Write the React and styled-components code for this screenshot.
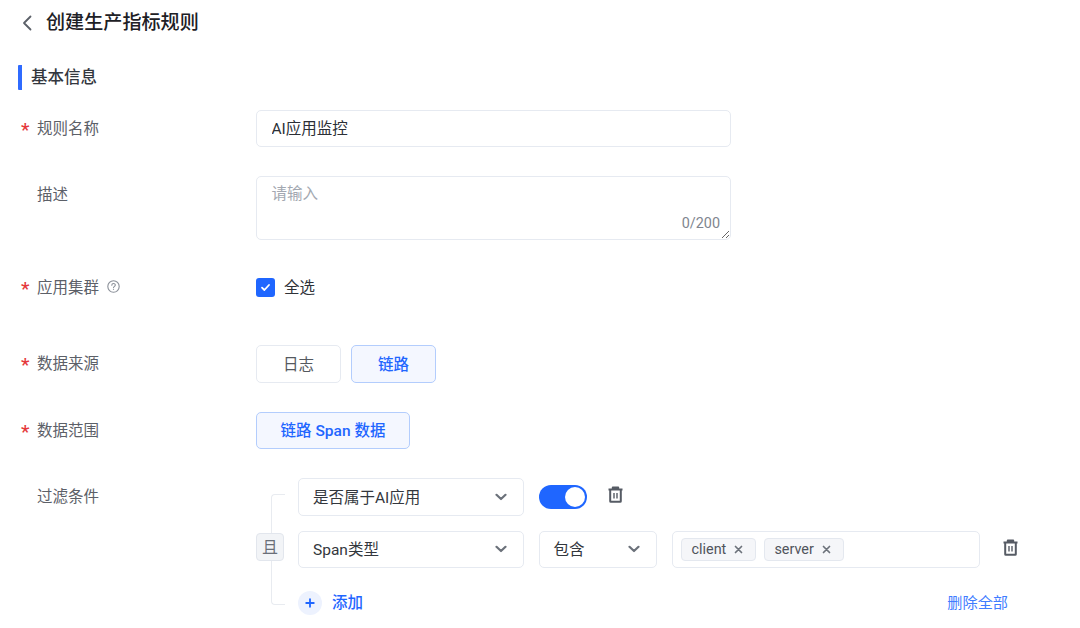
import React from "react";
import styled, { createGlobalStyle } from "styled-components";

const GlobalStyle = createGlobalStyle`
  html, body {
    margin: 0;
    padding: 0;
    background: #fff;
    height: 628px;
    overflow: hidden;
  }
  * { box-sizing: border-box; }
  body, input, textarea, button {
    font-family: Roboto, "Noto Sans CJK SC", sans-serif;
  }
`;

const Page = styled.div`
  width: 1080px;
  height: 628px;
  overflow: hidden;
  padding: 8px 0 0 18px;
  color: #2b2f36;
`;

const Header = styled.div`
  display: flex;
  align-items: center;
  height: 29px;
  padding-left: 4px;
  gap: 13px;
  color: #5b6068;
`;

const Title = styled.h1`
  margin: 0;
  font-size: 19.1px;
  line-height: 29px;
  font-weight: 500;
  color: #1d2025;
`;

const Section = styled.div`
  display: flex;
  align-items: center;
  margin-top: 28px;
  height: 25px;
  margin-left: -0.5px;
  border-left: 4px solid #2f6bff;
  border-radius: 1px;
  padding: 0 0 3px 9.5px;
  font-size: 16.5px;
  font-weight: 500;
  color: #33373e;
`;

const Form = styled.div`
  display: flex;
  flex-direction: column;
  gap: 29px;
  margin-top: 19.5px;
`;

const Row = styled.div`
  display: flex;
  align-items: flex-start;
  min-height: ${(p) => p.$height || 37.5}px;
`;

const Label = styled.div`
  position: relative;
  display: flex;
  align-items: center;
  gap: 8px;
  width: 238px;
  height: 37px;
  padding: 0 0 3px 19px;
  font-size: 15.5px;
  color: #5c6068;
  ${(p) =>
    p.$required &&
    `&::before {
      content: "*";
      position: absolute;
      left: 3px;
      top: 10px;
      font-size: 19px;
      line-height: 19px;
      font-weight: 500;
      color: #e5383b;
    }`}
`;

const TextInput = styled.input`
  width: 475px;
  height: 37.5px;
  padding: 0 14.5px 2px;
  border: 1.5px solid #e6eaf1;
  border-radius: 5px;
  font-size: 15.5px;
  color: #2b2f36;
  outline: none;
`;

const AreaWrap = styled.div`
  position: relative;
  width: 475px;
  height: 64px;
`;

const Area = styled.textarea`
  display: block;
  width: 100%;
  height: 100%;
  padding: 6px 14.5px;
  border: 1.5px solid #e6eaf1;
  border-radius: 5px;
  font-size: 15.5px;
  line-height: 22px;
  outline: none;
  resize: vertical;
  &::placeholder { color: #a3a8b1; }
`;

const Counter = styled.span`
  position: absolute;
  right: 11px;
  bottom: 8px;
  font-size: 14.4px;
  color: #80858e;
`;

const CheckRow = styled.label`
  display: flex;
  align-items: center;
  gap: 9px;
  height: 37px;
  font-size: 15.5px;
  color: #2f3238;
`;

const CheckBox = styled.span`
  display: flex;
  align-items: center;
  justify-content: center;
  width: 19px;
  height: 19px;
  border-radius: 3px;
  background: #1f66ff;
  color: #fff;
`;

const CheckText = styled.span`
  margin-top: -3px;
`;

const Options = styled.div`
  display: flex;
  gap: 10px;
`;

const Option = styled.button`
  width: ${(p) => p.$width}px;
  height: 37.5px;
  padding: 0 0 2px;
  border: 1.5px solid ${(p) => (p.$active ? "#b3cdfd" : "#e6eaf1")};
  border-radius: 5px;
  background: ${(p) => (p.$active ? "#f4f7ff" : "#fff")};
  color: ${(p) => (p.$active ? "#1f66ff" : "#55595f")};
  font-size: 15.5px;
  font-weight: ${(p) => (p.$active ? 500 : 400)};
`;

const Filter = styled.div`
  display: flex;
`;

const Logic = styled.div`
  display: flex;
  flex-direction: column;
  width: 28px;
  margin: 16px 14px 0 0;
`;

const Bracket = styled.div`
  width: 14px;
  margin-left: 15px;
  height: ${(p) => p.$height}px;
  border-left: 1.5px solid #e8ebf0;
  ${(p) =>
    p.$bottom
      ? "border-bottom: 1.5px solid #e8ebf0; border-bottom-left-radius: 4px;"
      : "border-top: 1.5px solid #e8ebf0; border-top-left-radius: 4px;"}
`;

const LogicBadge = styled.div`
  display: flex;
  align-items: center;
  justify-content: center;
  width: 28px;
  height: 28px;
  padding-bottom: 2px;
  border: 1.5px solid #e2e6ed;
  border-radius: 4px;
  background: #f2f4f7;
  color: #6a6f78;
  font-size: 16px;
`;

const Rules = styled.div`
  display: flex;
  flex-direction: column;
  gap: 15px;
`;

const RuleRow = styled.div`
  display: flex;
  align-items: flex-start;
  gap: 14.5px;
`;

const Select = styled.div`
  display: flex;
  align-items: center;
  justify-content: space-between;
  width: ${(p) => p.$width}px;
  height: 37.5px;
  padding: 0 16px 2px 14px;
  border: 1.5px solid #e6eaf1;
  border-radius: 5px;
  font-size: 15.5px;
  color: #33373d;
  svg { color: #6b717a; margin-top: 2px; }
`;

const Switch = styled.div`
  display: flex;
  align-items: center;
  justify-content: flex-end;
  width: 48px;
  height: 24px;
  margin-top: 7px;
  padding-right: 2px;
  border-radius: 12px;
  background: #1f66ff;
  &::after {
    content: "";
    width: 20px;
    height: 20px;
    border-radius: 50%;
    background: #fff;
  }
`;

const IconButton = styled.span`
  display: flex;
  color: #565b64;
  margin: ${(p) => p.$margin};
`;

const TagBox = styled.div`
  display: flex;
  align-items: center;
  gap: 7.6px;
  width: 308.5px;
  height: 37.5px;
  padding-left: 8.5px;
  border: 1.5px solid #e6eaf1;
  border-radius: 5px;
`;

const Tag = styled.span`
  display: flex;
  align-items: center;
  gap: 8px;
  height: 23px;
  padding: 0 12px 0 9.5px;
  border: 1.5px solid #e4e8ef;
  border-radius: 4px;
  background: #f5f6f9;
  font-size: 14.4px;
  color: #50545c;
  svg { color: #6d727b; }
`;

const AddRow = styled.div`
  display: flex;
  align-items: center;
  justify-content: space-between;
  width: 710px;
  height: 24px;
  margin-top: 22.5px;
`;

const AddButton = styled.span`
  display: flex;
  align-items: center;
  gap: 10px;
  font-size: 15.5px;
  font-weight: 500;
  color: #1f66ff;
`;

const AddLabel = styled.span`
  margin-top: -3px;
`;

const AddCircle = styled.span`
  display: flex;
  align-items: center;
  justify-content: center;
  width: 24px;
  height: 24px;
  border-radius: 50%;
  background: #edf2fe;
`;

const RemoveAll = styled.span`
  margin-top: -3px;
  font-size: 15.2px;
  color: #3f7dff;
`;

const Chevron = () => (
  <svg width="12" height="12" viewBox="0 0 12 12" fill="none" stroke="currentColor" strokeWidth="2.2" strokeLinecap="round" strokeLinejoin="round">
    <path d="M1.5 3.8 6 8l4.500-4.200" />
  </svg>
);

const Trash = () => (
  <svg width="17" height="17" viewBox="0 0 17 17" fill="none" stroke="currentColor" strokeWidth="2" strokeLinejoin="round">
    <path d="M1.5 3.5h14M5.8 3.3V1.4h5.400v1.900" />
    <path d="M3.2 3.800v11.400a.6.6 0 0 0 .6.6h9.400a.6.6 0 0 0 .6-.6V3.800" />
    <path d="M7 7v5.500M10 7v5.500" strokeWidth="1.4" />
  </svg>
);

const Close = () => (
  <svg width="9" height="9" viewBox="0 0 9 9" fill="none" stroke="currentColor" strokeWidth="1.7" strokeLinecap="round">
    <path d="M1.5 1.500l6 6M7.500 1.500l-6 6" />
  </svg>
);

const App = () => (
  <Page>
    <GlobalStyle />
    <Header>
      <svg width="11" height="16" viewBox="0 0 11 16" fill="none" stroke="currentColor" strokeWidth="1.8" strokeLinecap="round" strokeLinejoin="round">
        <path d="M8.5 1.500 2 8l6.500 6.500" />
      </svg>
      <Title>创建生产指标规则</Title>
    </Header>
    <Section>基本信息</Section>
    <Form>
      <Row>
        <Label $required>规则名称</Label>
        <TextInput defaultValue="AI应用监控" readOnly />
      </Row>
      <Row>
        <Label>描述</Label>
        <AreaWrap>
          <Area placeholder="请输入" readOnly />
          <Counter>0/200</Counter>
        </AreaWrap>
      </Row>
      <Row $height={47}>
        <Label $required>
          应用集群
          <svg width="13" height="13" viewBox="0 0 13 13" fill="none" stroke="#8a8f98" strokeWidth="1.1">
            <circle cx="6.5" cy="6.5" r="5.7" />
            <path d="M4.8 5.200c0-2.200 3.500-2.200 3.500-.1 0 1.300-1.800 1.300-1.800 2.700" strokeLinecap="round" />
            <path d="M6.5 9.200v.8" />
          </svg>
        </Label>
        <CheckRow>
          <CheckBox>
            <svg width="11" height="9" viewBox="0 0 11 9" fill="none" stroke="currentColor" strokeWidth="1.8" strokeLinecap="round" strokeLinejoin="round">
              <path d="M2 4.600 4.400 7 9 2" />
            </svg>
          </CheckBox>
          <CheckText>全选</CheckText>
        </CheckRow>
      </Row>
      <Row>
        <Label $required>数据来源</Label>
        <Options>
          <Option $width={85}>日志</Option>
          <Option $width={85} $active>链路</Option>
        </Options>
      </Row>
      <Row>
        <Label $required>数据范围</Label>
        <Options>
          <Option $width={154} $active>链路 Span 数据</Option>
        </Options>
      </Row>
      <Row>
        <Label>过滤条件</Label>
        <Filter>
          <Logic>
            <Bracket $height={39} />
            <LogicBadge>且</LogicBadge>
            <Bracket $height={44} $bottom />
          </Logic>
          <div>
            <Rules>
              <RuleRow>
                <Select $width={226}>是否属于AI应用<Chevron /></Select>
                <Switch />
                <IconButton $margin="7.5px 0 0 6px"><Trash /></IconButton>
              </RuleRow>
              <RuleRow>
                <Select $width={226}>Span类型<Chevron /></Select>
                <Select $width={118.5}>包含<Chevron /></Select>
                <TagBox>
                  <Tag>client<Close /></Tag>
                  <Tag>server<Close /></Tag>
                </TagBox>
                <IconButton $margin="8px 0 0 7px"><Trash /></IconButton>
              </RuleRow>
            </Rules>
            <AddRow>
              <AddButton>
                <AddCircle>
                  <svg width="10" height="10" viewBox="0 0 10 10" fill="none" stroke="currentColor" strokeWidth="1.8" strokeLinecap="round">
                    <path d="M5 1.200v7.600M1.200 5h7.600" />
                  </svg>
                </AddCircle>
                <AddLabel>添加</AddLabel>
              </AddButton>
              <RemoveAll>删除全部</RemoveAll>
            </AddRow>
          </div>
        </Filter>
      </Row>
    </Form>
  </Page>
);

export default App;
